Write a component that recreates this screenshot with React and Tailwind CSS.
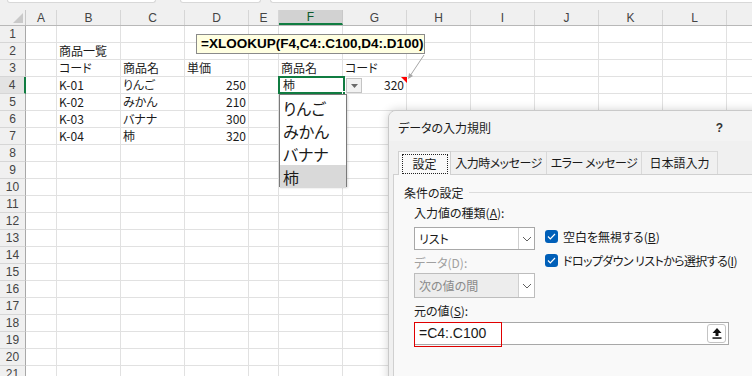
import React from 'react';

const cols = [
  { k: 'A', w: 'w-[31px]' },
  { k: 'B', w: 'w-[64px]' },
  { k: 'C', w: 'w-[64px]' },
  { k: 'D', w: 'w-[64px]' },
  { k: 'E', w: 'w-[30px]' },
  { k: 'F', w: 'w-[64px]' },
  { k: 'G', w: 'w-[64px]' },
  { k: 'H', w: 'w-[64px]' },
  { k: 'I', w: 'w-[64px]' },
  { k: 'J', w: 'w-[64px]' },
  { k: 'K', w: 'w-[64px]' },
  { k: 'L', w: 'w-[64px]' },
  { k: 'M', w: 'w-[64px]' },
];

// row -> column -> [text, align]
const data = {
  2: { B: ['商品一覧'] },
  3: { B: ['コード'], C: ['商品名'], D: ['単価'], F: ['商品名'], G: ['コード'] },
  4: { B: ['K-01'], C: ['りんご'], D: ['250', 'r'], G: ['320', 'r'] },
  5: { B: ['K-02'], C: ['みかん'], D: ['210', 'r'] },
  6: { B: ['K-03'], C: ['バナナ'], D: ['300', 'r'] },
  7: { B: ['K-04'], C: ['柿'], D: ['320', 'r'] },
};

const rows = Array.from({ length: 21 }, (_, i) => i + 1);

const jp = "font-['Noto_Sans_CJK_JP',sans-serif] [font-feature-settings:'palt']";

function Chevron() {
  return (
    <svg width="10" height="6" viewBox="0 0 10 6">
      <path d="M1 1l4 4 4-4" fill="none" stroke="#606060" strokeWidth="1" />
    </svg>
  );
}

function Check() {
  return (
    <span className="w-[13px] h-[13px] shrink-0 rounded-[3px] bg-[#005fb8] flex items-center justify-center">
      <svg width="9" height="7" viewBox="0 0 9 7">
        <path d="M1 3.5l2.3 2.3L8 1" fill="none" stroke="#fff" strokeWidth="1.2" />
      </svg>
    </span>
  );
}

function Sheet() {
  return (
    <div className={`${jp} text-[12px] text-[#1a1a1a]`}>
      {/* top strip (bottom edge of name box / formula bar) */}
      <div className="h-[10px] bg-[#f0f0f0] flex">
        <div className="ml-[7px] w-[149px] h-[3px] bg-white border-x border-b border-[#d8d8d8] rounded-b-[3px]" />
        <div className="ml-[24px] w-[81px] h-[3px] bg-white border-x border-b border-[#d8d8d8] rounded-b-[3px]" />
        <div className="ml-[9px] flex-1 h-[3px] bg-white border-l border-b border-[#d8d8d8] rounded-bl-[3px]" />
      </div>
      {/* column header */}
      <div className="flex h-[16px] bg-[#f0f0f0] border-b border-[#b8b8b8] font-['Liberation_Sans',sans-serif] text-[12px] text-[#444]">
        <div className="w-[26px] shrink-0 border-r border-[#c8c8c8] relative">
          <svg className="absolute right-[2px] bottom-[2px]" width="10" height="10" viewBox="0 0 10 10">
            <path d="M10 0V10H0Z" fill="#c9c9c9" />
          </svg>
        </div>
        {cols.map((c) => (
          <div
            key={c.k}
            className={`${c.w} shrink-0 flex items-center justify-center border-r ${
              c.k === 'F'
                ? 'bg-[#d2d2d2] border-b-2 border-b-[#107c41] text-[#0e5a2e] border-r-[#c8c8c8]'
                : 'border-[#d6d6d6]'
            }`}
          >
            {c.k === 'M' ? '' : c.k}
          </div>
        ))}
      </div>
      {rows.map((r) => (
        <div key={r} className="flex h-[17px]">
          <div
            className={`w-[26px] shrink-0 border-b border-[#d6d6d6] flex items-center justify-center font-['Liberation_Sans',sans-serif] text-[12px] text-[#444] ${
              r === 4 ? 'border-r-2 border-r-[#107c41] bg-[#e3e3e3] text-[#0e5a2e]' : 'bg-[#f0f0f0] border-r border-r-[#a8a8a8]'
            }`}
          >
            {r}
          </div>
          {cols.map((c) => {
            const cell = data[r] && data[r][c.k];
            return (
              <div
                key={c.k}
                className={`${c.w} shrink-0 border-r border-b border-[#e1e1e1] flex items-center px-[2px] leading-none whitespace-nowrap ${
                  cell && cell[1] === 'r' ? 'justify-end' : ''
                }`}
              >
                {cell ? cell[0] : ''}
              </div>
            );
          })}
        </div>
      ))}
    </div>
  );
}

export default function App() {
  return (
    <div className="relative w-[752px] h-[376px] overflow-hidden bg-white">
      <Sheet />

      {/* active cell F4 */}
      <div className={`${jp} absolute left-[278px] top-[76px] w-[67px] h-[18px] border-2 border-[#107c41] bg-white text-[12px] text-[#1a1a1a] flex items-center pl-[3px]`}>
        柿
        <span className="absolute -right-[3px] -bottom-[3px] w-[4px] h-[4px] bg-[#107c41] border border-white" />
      </div>
      {/* dropdown button */}
      <div className="absolute left-[346px] top-[78px] w-[16px] h-[15px] bg-[#f2f2f2] border border-[#c4c4c4] flex items-center justify-center">
        <svg width="7" height="4" viewBox="0 0 7 4">
          <path d="M0 0h7L3.5 4Z" fill="#6a6a6a" />
        </svg>
      </div>
      {/* dropdown list */}
      <div className={`${jp} absolute left-[279px] top-[94px] w-[68px] h-[93px] bg-white border border-[#7a7a7a] text-[16px] text-[#1a1a1a] pt-[1px] shadow-[1px_1px_2px_rgba(0,0,0,0.15)]`}>
        {['りんご', 'みかん', 'バナナ', '柿'].map((t, i) => (
          <div key={t} className={`h-[23px] flex items-center pl-[3px] leading-none ${i === 3 ? 'bg-[#d9d9d9]' : ''}`}>
            {t}
          </div>
        ))}
      </div>

      {/* formula callout */}
      <div className="absolute left-[196px] top-[34px] w-[229px] h-[20px] bg-[#ffffe1] border border-[#8a8a8a] flex items-center pl-[4px] font-['Liberation_Sans',sans-serif] font-bold text-[13.5px] text-black whitespace-nowrap">
        =XLOOKUP(F4,C4:.C100,D4:.D100)
      </div>
      <svg className="absolute left-0 top-0" width="752" height="376" viewBox="0 0 752 376">
        <line x1="424" y1="55" x2="410" y2="76" stroke="#a6a6a6" strokeWidth="1" />
        <path d="M408 79l1-6 4 3Z" fill="#a6a6a6" />
        <path d="M401 77h6v6Z" fill="#ff0000" />
      </svg>

      {/* data validation dialog */}
      <div className={`${jp} absolute left-[388px] top-[110px] w-[380px] h-[280px] bg-[#f0f0f0] border border-[#c9c9c9] rounded-tl-[8px] shadow-[0_0_10px_rgba(0,0,0,0.18)] text-[12px] text-[#1a1a1a] flex flex-col overflow-hidden whitespace-nowrap`}>
        <div className="h-[30px] bg-[#f3f3f3] flex items-end pb-[4px] pl-[9px] pr-[44px] justify-between shrink-0">
          <span>データの入力規則</span>
          <span className="font-['Liberation_Sans',sans-serif] font-bold text-[12px] text-[#333]">?</span>
        </div>
        <div className="pt-[10px] pl-[4px] flex-1 flex flex-col">
          <div className="flex h-[23px] pl-[5px] relative z-10">
            <div className="w-[53px] h-[24px] bg-[#f9f9f9] border border-b-0 border-[#d0d0d0] flex items-center justify-center">
              <span className="w-[46px] h-[20px] border border-dotted border-[#222] flex items-center justify-center">設定</span>
            </div>
            <div className="w-[96px] bg-[#f0f0f0] border-t border-r border-[#d9d9d9] flex items-center justify-center tracking-[-0.5px]">入力時メッセージ</div>
            <div className="w-[95px] bg-[#f0f0f0] border-t border-r border-[#d9d9d9] flex items-center justify-center tracking-[-0.5px]">エラー メッセージ</div>
            <div className="w-[76px] bg-[#f0f0f0] border-t border-r border-[#d9d9d9] flex items-center justify-center">日本語入力</div>
          </div>
          <div className="flex-1 bg-[#f9f9f9] border-t border-l border-[#d0d0d0] pl-[10px] pt-[10px]">
            <div className="flex items-center gap-[5px] h-[16px]">
              <span>条件の設定</span>
              <span className="flex-1 h-px bg-[#dcdcdc] mt-[-2px]" />
            </div>
            <div className="pl-[10px] pt-[4px]">
              <div className="h-[16px] flex items-center">
                入力値の種類(<span className="underline">A</span>):
              </div>
              <div className="flex mt-[6px]">
                <div className="w-[121px] shrink-0">
                  <div className="h-[23px] bg-white border border-[#a8a8a8] flex">
                    <span className="flex-1 flex items-center pl-[4px]">リスト</span>
                    <span className="w-[16px] border-l border-[#cfcfcf] flex items-center justify-center"><Chevron /></span>
                  </div>
                  <div className="h-[16px] mt-[5px] flex items-center text-[#a0a0a0]">データ(D):</div>
                  <div className="h-[25px] mt-[2px] bg-[#ededed] border border-[#bdbdbd] flex text-[#8a8a8a]">
                    <span className="flex-1 flex items-center pl-[4px]">次の値の間</span>
                    <span className="w-[16px] bg-white border-l border-[#cfcfcf] flex items-center justify-center"><Chevron /></span>
                  </div>
                </div>
                <div className="pl-[10px] pt-[3px] flex flex-col gap-[11px]">
                  <div className="flex items-center gap-[5px] h-[13px]">
                    <Check />
                    <span>空白を無視する(<span className="underline">B</span>)</span>
                  </div>
                  <div className="flex items-center gap-[5px] h-[13px]">
                    <Check />
                    <span className="tracking-[-0.6px]">ドロップダウン リストから選択する(<span className="underline">I</span>)</span>
                  </div>
                </div>
              </div>
              <div className="h-[16px] mt-[5px] flex items-center">
                元の値(<span className="underline">S</span>):
              </div>
              <div className="mt-[3px] w-[315px] h-[23px] bg-white border border-[#a8a8a8] flex items-center relative">
                <span className="absolute -left-px -top-px w-[88px] h-[25px] border border-[#e00000]" />
                <span className="pl-[4px] font-['Liberation_Sans',sans-serif] text-[14px]">=C4:.C100</span>
                <span className="ml-auto mr-[2px] w-[19px] h-[19px] bg-white border border-[#c4c4c4] rounded-[3px] flex items-center justify-center">
                  <svg width="10" height="11" viewBox="0 0 10 11">
                    <path d="M5 0L9.5 5H6.5V8H3.5V5H0.5Z" fill="#111" />
                    <rect x="0.5" y="9.3" width="9" height="1.5" fill="#111" />
                  </svg>
                </span>
              </div>
            </div>
          </div>
        </div>
      </div>
    </div>
  );
}
